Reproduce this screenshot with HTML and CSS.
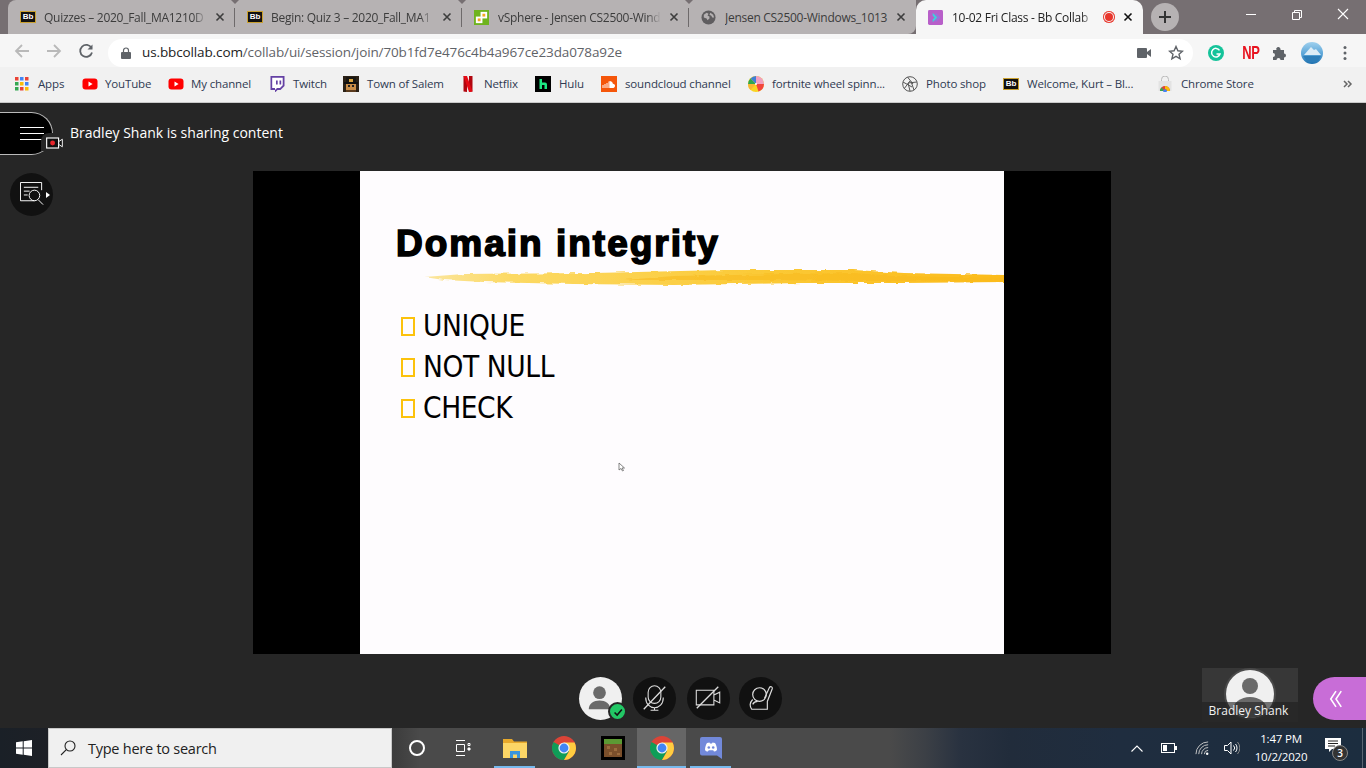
FILE: index.html
```html
<!DOCTYPE html>
<html lang="en">
<head>
<meta charset="utf-8">
<title>10-02 Fri Class - Bb Collaborate</title>
<link rel="stylesheet" href="styles.css">
</head>
<body>
<svg class="defs" aria-hidden="true">
  <symbol id="chrome" viewBox="0 0 24 24">
    <circle cx="12" cy="12" r="12" fill="#db4437"/>
    <path d="M12 12 1.600 6A12 12 0 0 0 12 24l6-10.400z" fill="#0f9d58"/>
    <path d="M12 6.500h10.600A12 12 0 0 1 24 12a12 12 0 0 1-12 12l5-8.600z" fill="#ffcd40"/>
    <circle cx="12" cy="12" r="5.600" fill="#f1f1f1"/>
    <circle cx="12" cy="12" r="4.400" fill="#4285f4"/>
  </symbol>
  <symbol id="yt" viewBox="0 0 16 16">
    <rect x="0.500" y="2.500" width="15" height="11" rx="3" fill="#f00"/>
    <path d="M6.500 5.600 10.600 8l-4.100 2.400z" fill="#fff"/>
  </symbol>
  <symbol id="closex" viewBox="0 0 10 10">
    <path d="M1.500 1.500l7 7M8.500 1.500l-7 7" fill="none" stroke="currentColor" stroke-width="1.600"/>
  </symbol>
</svg>

<header class="tabstrip">
  <div class="tabs">
    <div class="tab">
      <span class="bb">Bb</span>
      <span class="tab-title tab-fade">Quizzes – 2020_Fall_MA1210D</span>
      <svg class="tab-x"><use href="#closex"/></svg>
    </div>
    <div class="tab">
      <span class="bb">Bb</span>
      <span class="tab-title tab-fade">Begin: Quiz 3 – 2020_Fall_MA1</span>
      <svg class="tab-x"><use href="#closex"/></svg>
    </div>
    <div class="tab">
      <svg class="fav" viewBox="0 0 16 16"><rect width="16" height="16" fill="#6fb31e"/><rect x="2" y="7" width="7" height="7" fill="#fff"/><rect x="7" y="2" width="7" height="7" fill="#fff"/><rect x="4" y="9" width="3" height="3" fill="#f5a623"/><rect x="9" y="4" width="3" height="3" fill="#f5a623"/></svg>
      <span class="tab-title tab-fade">vSphere - Jensen CS2500-Wind</span>
      <svg class="tab-x"><use href="#closex"/></svg>
    </div>
    <div class="tab tab-last">
      <svg class="fav" viewBox="0 0 16 16"><circle cx="8" cy="8" r="7.500" fill="#5f5d5f"/><path d="M3 5l3-2 2 1-1 2 2 1v2l-2 2-1-2-3-1zM10 3l3 2 1 3-2 0-1-2-2-1z" fill="#b5b1b2"/></svg>
      <span class="tab-title">Jensen CS2500-Windows_1013</span>
      <svg class="tab-x"><use href="#closex"/></svg>
    </div>
    <div class="tab tab-active">
      <svg class="fav" viewBox="0 0 16 16"><rect width="16" height="16" rx="1.500" fill="#b85fc9"/><path d="M5 3l5 5-5 5V10l2-2-2-2z" fill="#3ed0dd"/><path d="M8 3l5 5-5 5v-2l3-3-3-3z" fill="#8a7be0"/></svg>
      <span class="tab-title tab-fade">10-02 Fri Class - Bb Collab</span>
      <span class="rec"></span>
      <svg class="tab-x"><use href="#closex"/></svg>
    </div>
  </div>
  <div class="newtab"><svg viewBox="0 0 14 14"><path d="M7 1v12M1 7h12" stroke="#333" stroke-width="2"/></svg></div>
  <div class="winctl">
    <svg viewBox="0 0 46 34"><path d="M18 14.500h10" stroke="#fff"/></svg>
    <svg viewBox="0 0 46 34"><path d="M18.500 12.500h7v7h-7zM20.500 12.500v-2h7v7h-2" fill="none" stroke="#fff"/></svg>
    <svg viewBox="0 0 46 34"><path d="M18 9l10 10M28 9 18 19" stroke="#fff" stroke-width="1.100"/></svg>
  </div>
</header>

<div class="toolbar">
  <svg class="nav nav-off" viewBox="0 0 16 16"><path d="M15 8H2M8 2 2 8l6 6" fill="none" stroke="#b9b9b9" stroke-width="1.800"/></svg>
  <svg class="nav nav-off" viewBox="0 0 16 16"><path d="M1 8h13M8 2l6 6-6 6" fill="none" stroke="#b9b9b9" stroke-width="1.800"/></svg>
  <svg class="nav" viewBox="0 0 16 16"><path d="M13.500 5A6 6 0 1 0 14 9.500" fill="none" stroke="#5f6368" stroke-width="1.800"/><path d="M14.500 1.500v5h-5z" fill="#5f6368"/></svg>
  <div class="omnibox">
    <svg class="lock" viewBox="0 0 10 12"><path d="M2.500 5V3.500a2.500 2.500 0 0 1 5 0V5" fill="none" stroke="#5f6368" stroke-width="1.200"/><rect y="5" width="10" height="7" rx="1" fill="#5f6368"/></svg>
    <span class="url"><b>us.bbcollab.com</b>/collab/ui/session/join/70b1fd7e476c4b4a967ce23da078a92e</span>
    <svg class="cam" viewBox="0 0 14 10"><rect width="10" height="10" rx="1" fill="#5f6368"/><path d="M10 4l4-3v8l-4-3z" fill="#5f6368"/></svg>
    <svg class="star" viewBox="0 0 16 16"><path d="M8 1.500l1.900 4.300 4.600.4-3.500 3 1.100 4.600L8 11.400l-4.100 2.400L5 9.200l-3.500-3 4.600-.4z" fill="none" stroke="#5f6368" stroke-width="1.400"/></svg>
  </div>
  <div class="exts">
    <svg viewBox="0 0 16 16"><circle cx="8" cy="8" r="8" fill="#15c39a"/><path d="M11.500 5.300A4.300 4.300 0 1 0 12 9H8.500" fill="none" stroke="#fff" stroke-width="1.500"/></svg>
    <span class="np">NP</span>
    <svg viewBox="0 0 16 16"><path d="M1 5h3.500a2 2 0 1 1 3.500-2 2 2 0 0 1 .5 2H12v3.500a2 2 0 1 1 0 4V15H8.500a2 2 0 1 0-4 0H1v-3a2 2 0 1 0 0-4z" fill="#5f6368"/></svg>
    <svg class="avatar" viewBox="0 0 22 22"><defs><linearGradient id="av" x1="0" y1="0" x2="0" y2="1"><stop offset="0" stop-color="#9fd0ee"/><stop offset=".55" stop-color="#5aa5d8"/><stop offset="1" stop-color="#1c6fae"/></linearGradient></defs><circle cx="11" cy="11" r="11" fill="url(#av)"/><path d="M3 13 10 5l3 3 2-1 5 6z" fill="#dcecf6"/><path d="M2 14h18l-3 5H6z" fill="#2c7db8"/></svg>
    <svg class="dots" viewBox="0 0 4 16"><circle cx="2" cy="2.500" r="1.500" fill="#5f6368"/><circle cx="2" cy="8" r="1.500" fill="#5f6368"/><circle cx="2" cy="13.500" r="1.500" fill="#5f6368"/></svg>
  </div>
</div>

<nav class="bookmarks">
  <div class="bm"><svg class="ico" viewBox="0 0 14 14"><g><rect width="3.500" height="3.500" fill="#ea4335"/><rect x="5" width="3.500" height="3.500" fill="#4285f4"/><rect x="10" width="3.500" height="3.500" fill="#ea4335"/><rect y="5" width="3.500" height="3.500" fill="#34a853"/><rect x="5" y="5" width="3.500" height="3.500" fill="#fbbc05"/><rect x="10" y="5" width="3.500" height="3.500" fill="#4285f4"/><rect y="10" width="3.500" height="3.500" fill="#34a853"/><rect x="5" y="10" width="3.500" height="3.500" fill="#ea4335"/><rect x="10" y="10" width="3.500" height="3.500" fill="#fbbc05"/></g></svg><span>Apps</span></div>
  <div class="bm bm-yt"><svg class="ico"><use href="#yt"/></svg><span>YouTube</span></div>
  <div class="bm bm-yt"><svg class="ico"><use href="#yt"/></svg><span>My channel</span></div>
  <div class="bm"><svg class="ico" viewBox="0 0 16 16"><path d="M1.500 0H15.500v10l-4 4H8.500L6 16.500V14H1.500z" fill="#6441a4"/><path d="M3.200 1.800h10.500v7.500L11 12H8l-2 2v-2H3.200z" fill="#fff"/><path d="M7 4.500h1.700v4H7zM10.500 4.500h1.700v4h-1.700z" fill="#6441a4"/></svg><span>Twitch</span></div>
  <div class="bm"><svg class="ico" viewBox="0 0 16 16"><rect width="16" height="16" fill="#2b2116"/><rect x="3" y="1" width="10" height="5" fill="#1a1712"/><rect x="1" y="6" width="14" height="2" fill="#111"/><rect x="6" y="3" width="4" height="3" fill="#d9a441"/><rect x="3" y="8" width="10" height="6" fill="#c98d48"/><rect x="5" y="9" width="2" height="2" fill="#222"/><rect x="9" y="9" width="2" height="2" fill="#222"/><rect x="3" y="14" width="10" height="2" fill="#5a3b1e"/></svg><span>Town of Salem</span></div>
  <div class="bm"><svg class="ico" viewBox="0 0 16 16"><path d="M3.500 0H7v16l-3.500-.4z" fill="#b1060f"/><path d="M9 0h3.500v15.600L9 16z" fill="#b1060f"/><path d="M3.500 0H7l5.500 15.600L9 16z" fill="#e50914"/></svg><span>Netflix</span></div>
  <div class="bm"><svg class="ico" viewBox="0 0 16 16"><rect width="16" height="16" fill="#000"/><path d="M4.500 3H7v3.500h3a2 2 0 0 1 2 2V13H9.500V9H7v4H4.500z" fill="#1ce783"/></svg><span>Hulu</span></div>
  <div class="bm"><svg class="ico" viewBox="0 0 16 16"><rect width="16" height="16" fill="#f5560a"/><path d="M2 12V9M4 12V8M6 12V7M8 12V5.500" stroke="#fff" stroke-width="1"/><path d="M8.500 5a3.500 3.500 0 0 1 3.400 2.700A2.200 2.200 0 0 1 12.500 12H8.500z" fill="#fff"/></svg><span>soundcloud channel</span></div>
  <div class="bm"><svg class="ico" viewBox="0 0 32 32"><circle cx="16" cy="16" r="16" fill="#f9d423"/><path d="M16 16V0a16 16 0 0 1 16 16z" fill="#f0a0c0"/><path d="M16 16 32 16a16 16 0 0 1-11 15z" fill="#f2453d"/><path d="M16 16 5 28A16 16 0 0 1 0 16z" fill="#f7b733"/><path d="M16 16H0A16 16 0 0 1 5 5z" fill="#2fa84f"/><path d="M16 16 5 5A16 16 0 0 1 16 0z" fill="#3f7fd6"/><circle cx="16" cy="16" r="2" fill="#fff"/></svg><span>fortnite wheel spinn...</span></div>
  <div class="bm"><svg class="ico" viewBox="0 0 16 16" fill="none" stroke="#555" stroke-width="1"><circle cx="8" cy="8" r="7.300"/><path d="M5.500 1 11 8M14.800 6 6 7M12 14 9 5.500M2.300 12.500 8 5M1 6l9 5M8 15l-2-8"/></svg><span>Photo shop</span></div>
  <div class="bm"><span class="bb">Bb</span><span>Welcome, Kurt – Bl...</span></div>
  <div class="bm"><svg class="ico" viewBox="0 0 16 16"><path d="M4.500 5V3.500a3.500 3.500 0 0 1 7 0V5" fill="none" stroke="#bbb"/><rect x="1.500" y="5" width="13" height="10" fill="#e3e3e3"/><path d="M3 15a5 5 0 0 1 10 0z" fill="#db4437"/><path d="M8 10a5 5 0 0 1 5 5h-3a2 2 0 0 0-2-2z" fill="#fbbc05"/><path d="M3 15a5 5 0 0 1 1.500-3.500L6.500 13.500A2 2 0 0 0 6 15z" fill="#34a853"/><circle cx="8" cy="15" r="1.800" fill="#4285f4"/></svg><span>Chrome Store</span></div>
  <svg class="more" viewBox="0 0 10 10"><path d="M1 2l3 3-3 3M5 2l3 3-3 3" fill="none" stroke="#666" stroke-width="1.500"/></svg>
</nav>

<main class="stage">
  <div class="slide">
    <div class="slide-page">
      <h1 class="slide-title">Domain integrity</h1>
      <svg class="brush" viewBox="0 0 580 20" preserveAspectRatio="none">
        <defs>
          <linearGradient id="brushfill" x1="0" x2="1" y1="0" y2="0">
            <stop offset="0" stop-color="#fbe6a0"/>
            <stop offset=".15" stop-color="#fcd964"/>
            <stop offset=".6" stop-color="#fbc935"/>
            <stop offset="1" stop-color="#fcbb1c"/>
          </linearGradient>
          <filter id="rough" x="-2%" y="-30%" width="104%" height="160%">
            <feTurbulence type="fractalNoise" baseFrequency=".09 .5" numOctaves="2" seed="4"/>
            <feDisplacementMap in="SourceGraphic" scale="3.500"/>
          </filter>
        </defs>
        <g filter="url(#rough)">
          <path d="M0 10 40 7 170 6 300 3 430 3 480 6 580 8 580 15 480 16 380 16 250 18 150 17 60 15 20 13Z" fill="url(#brushfill)"/>
          <path d="M250 9 430 6 470 9 580 11 580 13 470 14 330 13 200 13Z" fill="#f8b81c" opacity=".55"/>
        </g>
      </svg>
      <ul class="points">
        <li>UNIQUE</li>
        <li>NOT NULL</li>
        <li>CHECK</li>
      </ul>
      <svg class="pointer" viewBox="0 0 8 10"><path d="M1 1v7l2-1.500 1.500 2.500 1-.5L4 6h2.500z" fill="#fff" stroke="#555" stroke-width=".7"/></svg>
    </div>
  </div>

  <div class="session-head">
    <div class="menu-btn">
      <span class="burger"><i></i><i></i><i></i></span>
      <span class="rec-badge"><svg viewBox="0 0 18 12"><rect x=".7" y=".7" width="12.600" height="10.600" fill="#111" stroke="#fff" stroke-width="1.200"/><circle cx="7" cy="6" r="2.600" fill="#e8262c"/><path d="M13.500 4.500l3.800-2.500v8l-3.800-2.500z" fill="#111" stroke="#fff"/></svg></span>
    </div>
    <span class="share-text">Bradley Shank is sharing content</span>
  </div>
  <div class="tool-btn">
    <svg viewBox="0 0 26 26" fill="none" stroke="#fff" stroke-width="1"><path d="M15 19.500H.5V.5h22v8"/><path d="M4 5.500h15M4 9.500h6M4 13.500h4"/><circle cx="15" cy="14" r="5.500"/><path d="M19 18.500l5 5"/></svg>
    <i class="tool-caret"></i>
  </div>

  <div class="controls">
    <div class="ctl ctl-me">
      <svg viewBox="0 0 44 44"><circle cx="21" cy="16" r="6.500" fill="#6a6a6a"/><path d="M10 33c0-6 5-9 11-9s11 3 11 9z" fill="#6a6a6a"/></svg>
      <span class="ok"><svg viewBox="0 0 14 14"><path d="M3 7.500 6 10.500l5.500-6.500" fill="none" stroke="#111" stroke-width="1.800"/></svg></span>
    </div>
    <div class="ctl"><svg viewBox="0 0 44 44" fill="none" stroke="#ddd" stroke-width="1.100"><rect x="15.500" y="9" width="13" height="18" rx="6.500"/><path d="M13 21c0 14 18 14 18 0M22 31v3M18 34h8"/><path d="M11 33 33 10" stroke-width="1.300"/></svg></div>
    <div class="ctl"><svg viewBox="0 0 44 44" fill="none" stroke="#ddd" stroke-width="1.100"><path d="M9.500 13.500h18v15h-18zM27.500 18.500l6-3v11l-6-3"/><path d="M10 32 32 10" stroke-width="1.300"/></svg></div>
    <div class="ctl ctl-hand"><svg viewBox="0 0 44 44" fill="none" stroke="#ddd" stroke-width="1.200"><circle cx="21" cy="18" r="7"/><path d="M26 22 31 11c1-2 3.500-1 3 1L29 25v8H13c-2-3-2-7 1-10"/><path d="M14 28c1-2 3-3 5-3"/></svg></div>
  </div>

  <div class="video-tile">
    <span class="tile-avatar"><svg viewBox="0 0 48 48"><circle cx="24" cy="16" r="8" fill="#6a6a6a"/><ellipse cx="24" cy="40" rx="17" ry="13" fill="#6a6a6a"/></svg></span>
    <span class="tile-name">Bradley Shank</span>
  </div>
  <div class="panel-tab"><svg viewBox="0 0 16 22" fill="none" stroke="#fff" stroke-width="1.800"><path d="M8 2 2 11l6 9M14 2 8 11l6 9"/></svg></div>
</main>

<footer class="taskbar">
  <svg class="start" viewBox="0 0 16 16"><path d="M0 2.300 6.700 1.300V7.500H0zM7.700 1.200 16 0v7.500H7.700zM0 8.500h6.700v6.200L0 13.700zM7.700 8.500H16V16L7.700 14.800z" fill="#fff"/></svg>
  <div class="search">
    <svg viewBox="0 0 16 16" fill="none" stroke="#222" stroke-width="1.100"><circle cx="10" cy="6" r="5"/><path d="M6.300 9.700 1 15"/></svg>
    <span>Type here to search</span>
  </div>
  <div class="apps">
    <div class="app"><span class="cortana"></span></div>
    <div class="app"><svg class="taskview" viewBox="0 0 16 16" fill="none" stroke="#fff"><path d="M1 .5h9M1 15.500h9M1.500 4.500h8v7h-8zM13 3.500h2v2h-2z"/><path d="M13 8h2v2h-2z" fill="#fff"/></svg></div>
    <div class="app app-open"><svg viewBox="0 0 24 24"><path d="M0 3h9l2 2.500h13V22H0z" fill="#e8a92b"/><rect y="7" width="24" height="15" fill="#fcd666"/><path d="M7 22v-7h10v7h-3v-3.500h-4V22z" fill="#3a96dd"/></svg></div>
    <div class="app"><svg viewBox="0 0 24 24"><use href="#chrome"/></svg></div>
    <div class="app"><svg class="mc" viewBox="0 0 24 24"><rect width="24" height="24" fill="#000"/><rect x="3" y="3" width="18" height="18" fill="#7a4f2b"/><rect x="3" y="3" width="18" height="5" fill="#5c9a34"/><path d="M6 10h3v3H6zM13 12h3v3h-3zM8 16h3v3H8zM16 17h3v2h-3z" fill="#9a6b3e"/></svg></div>
    <div class="app app-active"><svg viewBox="0 0 24 24"><use href="#chrome"/></svg></div>
    <div class="app app-open"><svg viewBox="0 0 24 24"><path d="M3 1h18a2 2 0 0 1 2 2v20l-5-3.500H3a2 2 0 0 1-2-2V3a2 2 0 0 1 2-2z" fill="#7289da"/><path d="M6 14c0-3 1-5.500 2-7l2.500-.5.500 1h2l.5-1 2.500.5c1 1.500 2 4 2 7-1 1-2 1.500-3 1.500l-.8-1.200h-4.400L8.800 15.500c-1 0-2-.5-2.800-1.500z" fill="#fff"/><circle cx="9.800" cy="11.500" r="1.300" fill="#7289da"/><circle cx="14.200" cy="11.500" r="1.300" fill="#7289da"/></svg></div>
  </div>
  <div class="tray">
    <svg class="t-chev" viewBox="0 0 12 7"><path d="M.5 6.500 6 1l5.500 5.500" fill="none" stroke="#fff" stroke-width="1.100"/></svg>
    <svg class="t-bat" viewBox="0 0 16 10"><rect x=".5" y=".5" width="13" height="9" fill="none" stroke="#fff"/><rect x="2" y="2" width="4" height="6" fill="#fff"/><rect x="14" y="3" width="2" height="4" fill="#fff"/></svg>
    <svg class="t-wifi" viewBox="0 0 16 16" fill="none" stroke="#ccc"><path d="M1 14a13 13 0 0 1 13-13M4 14A10 10 0 0 1 14 4M7 14a7 7 0 0 1 7-7M10 14a4 4 0 0 1 4-4"/><circle cx="13" cy="13.500" r="1.300" fill="#fff" stroke="none"/></svg>
    <svg class="t-vol" viewBox="0 0 16 14" fill="none" stroke="#fff"><path d="M.5 4.500h3L7 1v12L3.500 9.500h-3z"/><path d="M9.500 4.500a3.500 3.500 0 0 1 0 5M11.500 3a6 6 0 0 1 0 8"/><path d="M13.500 1a9 9 0 0 1 0 12" stroke="#888"/></svg>
    <div class="clock"><span>1:47 PM</span><span>10/2/2020</span></div>
    <div class="notify">
      <svg viewBox="0 0 16 14"><path d="M0 0h16v11H7l-3 3v-3H0z" fill="#fff"/><path d="M3 3h10M3 5.500h10M3 8h7" stroke="#222"/></svg>
      <span class="badge">3</span>
    </div>
    <i class="show-desktop"></i>
  </div>
</footer>
</body>
</html>
```
FILE: styles.css
```css
*, *::before, *::after { box-sizing: border-box; }
html, body { margin: 0; height: 100%; }
body {
  width: 1366px;
  height: 768px;
  overflow: hidden;
  display: flex;
  flex-direction: column;
  font-family: "Open Sans", "Noto Sans", sans-serif;
  background: #262626;
}
.defs { display: none; }

/* tab strip */
.tabstrip {
  height: 34px;
  flex: none;
  background: #766f72;
  display: flex;
  padding-left: 8px;
}
.tabs { display: flex; }
.tab {
  width: 227px;
  height: 34px;
  background: #b6b2b3;
  display: flex;
  align-items: center;
  padding: 0 8px 0 12px;
  gap: 8px;
  position: relative;
  color: #3c3c3c;
  font-size: 12px;
  letter-spacing: -.28px;
}
.tab:first-child { border-top-left-radius: 8px; }
.tab-last { border-bottom-right-radius: 8px; }
.tab:not(.tab-active):not(.tab-last)::after {
  content: "";
  position: absolute;
  right: 0;
  top: 8px;
  height: 19px;
  width: 1px;
  background: #6e6a6b;
}
.tab:not(.tab-active):not(.tab-last)::before {
  content: "";
  position: absolute;
  right: -4px;
  top: 0;
  z-index: 1;
  border-top: 4px solid #766f72;
  border-left: 4px solid transparent;
  border-right: 4px solid transparent;
}
.tab-active {
  background: #f6f6f6;
  border-radius: 10px 10px 0 0;
  color: #222;
}
.tab-title {
  flex: 1;
  min-width: 0;
  white-space: nowrap;
  overflow: hidden;
}
.tab-fade {
  -webkit-mask-image: linear-gradient(90deg, #000 calc(100% - 14px), transparent);
  mask-image: linear-gradient(90deg, #000 calc(100% - 14px), transparent);
}
.tab-x { width: 10px; height: 10px; flex: none; color: #3d3d3d; margin-right: 2px; }
.tab-active .tab-x { color: #111; }
.bb {
  width: 16px;
  height: 12px;
  flex: none;
  background: #111;
  border: 1px solid #c9a02f;
  color: #fff;
  font: bold 8px/10px "Liberation Sans", sans-serif;
  text-align: center;
  letter-spacing: -.2px;
}
.fav { width: 15px; height: 15px; flex: none; margin-right: 1px; }
.rec {
  width: 12px;
  height: 12px;
  flex: none;
  border-radius: 50%;
  background: #e8362c;
  box-shadow: inset 0 0 0 1px #e8362c, inset 0 0 0 2px #f6f6f6;
}
.newtab {
  width: 28px;
  height: 28px;
  margin: 3px 0 0 8px;
  border-radius: 50%;
  background: #b6b2b3;
  display: flex;
  align-items: center;
  justify-content: center;
}
.newtab svg { width: 14px; height: 14px; }
.winctl { margin-left: auto; display: flex; }
.winctl svg { width: 46px; height: 34px; }

/* toolbar */
.toolbar {
  height: 33px;
  flex: none;
  background: #f6f6f6;
  display: flex;
  align-items: center;
  padding-left: 14px;
  gap: 16px;
}
.nav { width: 16px; height: 16px; flex: none; }
.omnibox {
  width: 1085px;
  height: 28px;
  margin: 4px 0 0 -2px;
  background: #fff;
  border-radius: 14px;
  display: flex;
  align-items: center;
  padding-left: 13px;
  flex: none;
}
.lock { width: 10px; height: 12px; flex: none; }
.url {
  margin: 0 0 2px 11px;
  font-size: 13.500px;
  color: #5f6368;
  letter-spacing: -.12px;
  white-space: nowrap;
}
.url b { font-weight: 400; color: #222; }
.cam { width: 14px; height: 10px; margin-left: auto; }
.star { width: 16px; height: 16px; margin: 0 9px 0 17px; }
.exts { display: flex; align-items: center; margin: 4px 0 0 -1px; height: 28px; gap: 16px; }
.exts svg { width: 16px; height: 16px; flex: none; }
.np {
  width: 16px;
  color: #e8131f;
  font: bold 18px/16px "Liberation Sans Narrow", "Liberation Sans", sans-serif;
  transform: scaleX(.72);
  letter-spacing: -.5px;
  text-align: center;
  white-space: nowrap;
}
.exts .avatar { width: 22px; height: 22px; margin-left: -3px; }
.exts .dots { width: 4px; height: 16px; margin-left: 4px; }

/* bookmarks */
.bookmarks {
  height: 36px;
  flex: none;
  background: #f1f1f1;
  border-bottom: 1px solid #c9c9c9;
  padding: 0 0 1px 15px;
  display: grid;
  grid-template-columns: 67px 86px 101px 74px 117px 75px 66px 147px 154px 101px 154px 186px 1fr;
  align-items: center;
  font-size: 11.500px;
  color: #2f3a52;
  letter-spacing: -.15px;
}
.bm { display: flex; align-items: center; gap: 8px; white-space: nowrap; }
.bm > span:last-child { margin-bottom: 2px; }
.bm-yt { gap: 7px; }
.ico { width: 16px; height: 16px; flex: none; }
.bm:first-child { gap: 9px; }
.bm:first-child .ico { width: 14px; height: 14px; }
.more { width: 10px; height: 10px; }

/* collaborate stage */
.stage {
  flex: 1;
  position: relative;
  background: #262626;
  padding: 68px 0 0 253px;
  min-height: 0;
}
.slide {
  width: 858px;
  height: 483px;
  background: #000;
  padding: 0 107px;
}
.slide-page {
  position: relative;
  height: 100%;
  background: #fefcfe;
  padding: 51px 0 0 36px;
}
.slide-title {
  margin: 0;
  font: bold 37px/44px "Liberation Sans", sans-serif;
  color: #000;
  -webkit-text-stroke: 1.600px #000;
  letter-spacing: 2px;
  white-space: nowrap;
}
.brush {
  display: block;
  width: 580px;
  height: 20px;
  margin: 1px 0 0 28px;
  filter: blur(.4px);
}
.points {
  list-style: none;
  margin: 19px 0 0 0;
  padding: 0 0 0 5px;
  font-family: "DejaVu Sans", sans-serif;
  font-stretch: condensed;
  font-size: 29.500px;
  line-height: 41px;
  color: #000;
  letter-spacing: -.4px;
}
.points li { display: flex; align-items: center; gap: 8px; }
.points li::before {
  content: "";
  width: 14px;
  height: 19px;
  border: 2.500px solid #fcc20c;
  flex: none;
}
.pointer { position: absolute; left: 258px; top: 291px; width: 8px; height: 10px; }

.session-head {
  position: absolute;
  left: 0;
  top: 9px;
  display: flex;
  align-items: center;
  gap: 17px;
}
.menu-btn {
  width: 53px;
  height: 43px;
  background: #000;
  border: 1px solid #bbb;
  border-left: 0;
  border-radius: 0 22px 22px 0;
  display: flex;
  align-items: center;
  justify-content: flex-end;
  padding-right: 8px;
  position: relative;
}
.burger { display: flex; flex-direction: column; gap: 5px; width: 24px; }
.burger i { height: 1px; background: #fff; display: block; }
.rec-badge {
  position: absolute;
  right: -11px;
  bottom: 3px;
  width: 22px;
  height: 18px;
  background: #262626;
  border-radius: 8px 0 0 0;
  display: flex;
  align-items: flex-end;
  justify-content: flex-end;
  padding: 0 0 2px 0;
}
.rec-badge svg { width: 17px; height: 12px; }
.share-text { color: #fff; font-size: 14px; white-space: nowrap; margin-bottom: 2px; }

.tool-btn {
  position: absolute;
  left: 10px;
  top: 70px;
  width: 43px;
  height: 43px;
  border-radius: 50%;
  background: #111;
  display: flex;
  align-items: center;
  padding-left: 10px;
}
.tool-btn svg { width: 25px; height: 25px; }
.tool-caret {
  position: absolute;
  right: 3px;
  top: 19px;
  border-left: 4px solid #fff;
  border-top: 3px solid transparent;
  border-bottom: 3px solid transparent;
}

.controls {
  position: absolute;
  left: 579px;
  top: 574px;
  display: flex;
  gap: 11px;
}
.ctl {
  width: 43px;
  height: 43px;
  border-radius: 50%;
  background: #111;
  position: relative;
}
.ctl-hand { margin-left: -2px; }
.ctl svg { display: block; width: 43px; height: 43px; }
.ctl-me { background: #f0f0f0; }
.ok {
  position: absolute;
  right: -5px;
  bottom: -1px;
  width: 19px;
  height: 19px;
  border-radius: 50%;
  background: #22c765;
  border: 2px solid #262626;
  display: flex;
  align-items: center;
  justify-content: center;
}
.ctl .ok svg { width: 12px; height: 12px; }

.video-tile {
  position: absolute;
  left: 1202px;
  top: 565px;
  width: 96px;
  height: 54px;
  background: #373737;
  overflow: hidden;
}
.tile-avatar {
  display: block;
  width: 48px;
  height: 48px;
  margin: 2px auto 0;
  border-radius: 50%;
  background: #f0f0f0;
  overflow: hidden;
  box-shadow: 0 0 0 2px #4a4a4a;
}
.tile-avatar svg { display: block; width: 48px; height: 48px; }
.tile-name {
  position: absolute;
  left: 0;
  right: 0;
  bottom: 0;
  height: 20px;
  padding: 0 3px 2px 0;
  background: rgba(30, 30, 30, .6);
  color: #f2f2f2;
  font-size: 12px;
  line-height: 18px;
  text-align: center;
  white-space: nowrap;
}
.panel-tab {
  position: absolute;
  left: 1313px;
  top: 574px;
  width: 53px;
  height: 43px;
  background: #c86dd7;
  border-radius: 22px 0 0 22px;
  display: flex;
  align-items: center;
  padding-left: 16px;
}
.panel-tab svg { width: 14px; height: 20px; }

/* taskbar */
.taskbar {
  height: 40px;
  flex: none;
  position: relative;
  display: flex;
  align-items: stretch;
  background: linear-gradient(90deg, #1a2027 0, #1d2026 48px, #3d3d3d 395px, #4a4a4a 420px, #4a4a4a 890px, #3c4046 925px, #293240 960px, #212c3b 1010px, #1f2d3f 1120px, #1c2d3f 1366px);
}
.start { width: 16px; height: 16px; margin: 12px 16px 0 16px; flex: none; }
.search {
  width: 344px;
  background: #f0f0f0;
  border: 1px solid #c8c8c8;
  display: flex;
  align-items: center;
  padding-left: 11px;
  gap: 12px;
  font-size: 14.500px;
  color: #222;
  letter-spacing: -.25px;
}
.search svg { width: 16px; height: 16px; flex: none; }
.apps { display: flex; }
.app {
  width: 49px;
  display: flex;
  align-items: center;
  justify-content: center;
  position: relative;
}
.app svg { width: 24px; height: 24px; }
.app .taskview { width: 16px; height: 16px; margin-right: 5px; }
.app-open::after, .app-active::after {
  content: "";
  position: absolute;
  left: 4px;
  right: 4px;
  bottom: 0;
  height: 2px;
  background: #76b9ed;
}
.app-active { background: #666; }
.app-active::after { left: 0; right: 0; }
.cortana {
  width: 16px;
  height: 16px;
  border-radius: 50%;
  border: 2px solid #fff;
}
.tray {
  margin-left: auto;
  display: flex;
  align-items: center;
  color: #fff;
  position: relative;
  padding-right: 3px;
}
.t-chev { width: 12px; height: 7px; margin-right: 18px; }
.t-bat { width: 16px; height: 10px; margin-right: 18px; }
.t-wifi { width: 15px; height: 15px; margin-right: 14px; }
.t-vol { width: 16px; height: 14px; }
.clock {
  width: 66px;
  margin: 0 3px 0 8px;
  display: flex;
  flex-direction: column;
  align-items: center;
  font-size: 11.500px;
  line-height: 18px;
  letter-spacing: -.2px;
}
.notify { width: 28px; height: 24px; position: relative; margin: 0 13px 0 4px; }
.notify svg { width: 16px; height: 14px; position: absolute; left: 4px; top: 2px; }
.badge {
  position: absolute;
  left: 11px;
  top: 9px;
  width: 16px;
  height: 16px;
  border-radius: 50%;
  background: #333;
  border: 1px solid #888;
  font-size: 10px;
  line-height: 14px;
  text-align: center;
  font-weight: 600;
}
.show-desktop { width: 1px; height: 40px; background: #5a6673; }
```
